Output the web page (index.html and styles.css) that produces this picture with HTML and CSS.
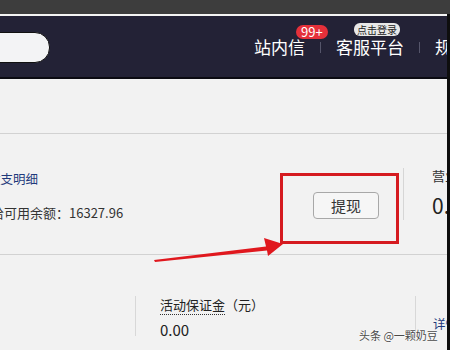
FILE: index.html
```html
<!DOCTYPE html>
<html lang="zh-CN">
<head>
  <meta charset="UTF-8">
  <title>资金账户</title>
  <link rel="stylesheet" href="styles.css">
</head>
<body>
  <div class="chrome"></div>

  <div class="frame">
    <!-- top navigation -->
    <div class="topbar">
      <div class="search"></div>
      <div class="nav">
        <span class="nav-item">站内信<span class="badge badge-red">99+</span></span>
        <span class="nav-sep"></span>
        <span class="nav-item">客服平台<span class="badge badge-light">点击登录</span></span>
        <span class="nav-sep"></span>
        <span class="nav-item">规则中心</span>
      </div>
    </div>

    <!-- account page -->
    <div class="page">
      <div class="band"></div>

      <div class="summary">
        <div class="info">
          <a class="link" href="#">收支明细</a>
          <p class="balance">结给可用余额：16327.96</p>
        </div>
        <button class="btn">提现</button>
        <div class="vline"></div>
        <div class="stat">
          <div class="stat-label">营业额</div>
          <div class="stat-value">0.00</div>
        </div>
      </div>

      <div class="deposits">
        <div class="cell cell-first"></div>
        <div class="cell cell-mid">
          <div class="dep-label"><span class="dotted">活动保证金</span>（元）</div>
          <div class="dep-value">0.00</div>
        </div>
        <div class="cell cell-last">
          <a class="link" href="#">详情</a>
        </div>
      </div>
    </div>
  </div>

  <!-- annotations drawn over the screenshot -->
  <div class="mark-box"></div>
  <svg class="mark-arrow" width="450" height="350" viewBox="0 0 450 350">
    <polygon points="154,260 266,246.5 264,238 283,244 268,256 267,250.5 155,262" fill="#e0181e"/>
  </svg>
  <div class="watermark">头条 @一颗奶豆</div>
</body>
</html>
```

FILE: styles.css
```css
body {
  margin: 0;
  width: 450px;
  height: 350px;
  overflow: hidden;
  position: relative;
  font-family: "Noto Sans CJK SC", "Noto Sans", sans-serif;
  background: #f2f2f2;
}
.chrome {
  height: 14px;
  background: #3d3d3d;
}
.frame {
  width: 447px;
  height: 336px;
  border-right: 3px solid #0e0e0e;
  overflow: hidden;
  background: #f2f2f2;
}

/* top navigation */
.topbar {
  display: flex;
  align-items: center;
  height: 61px;
  border-top: 2px solid #f4f4f4;
  border-bottom: 2px solid #0b0b12;
  background: #232236;
  overflow: hidden;
  white-space: nowrap;
}
.search {
  flex: none;
  width: 150px;
  height: 29px;
  margin-left: -102px;
  margin-top: 2px;
  border-radius: 15px;
  border: 1px solid #111;
  background: #f3f3f5;
}
.nav {
  display: flex;
  align-items: center;
  gap: 15px;
  margin-left: 204px;
  flex: none;
}
.nav-item {
  position: relative;
  color: #fff;
  font-size: 17px;
  line-height: 20px;
}
.nav-sep {
  width: 1px;
  height: 11px;
  margin-top: 2px;
  background: #55556a;
}
.badge {
  position: absolute;
  white-space: nowrap;
}
.badge-red {
  top: -12px;
  left: 42px;
  padding: 0 5px;
  height: 14px;
  line-height: 14px;
  font-size: 13px;
  color: #fff;
  background: #e5303a;
  border-radius: 7px;
}
.badge-light {
  top: -14px;
  left: 18px;
  padding: 0 3px;
  height: 13px;
  line-height: 13px;
  font-size: 10px;
  color: #222;
  background: #e8e8e8;
  border-radius: 6px;
}

/* account page */
.band {
  height: 54px;
  border-bottom: 1px solid #d2d2d2;
}
.summary {
  display: flex;
  height: 120px;
  border-bottom: 1px solid #d2d2d2;
}
.info {
  flex: 1;
  min-width: 0;
  margin-left: -12px;
  padding-top: 31px;
}
.link {
  color: #1f3a7c;
  text-decoration: none;
  font-size: 12.5px;
  line-height: 18px;
}
.balance {
  margin: 15px 0 0 -10px;
  font-size: 13px;
  line-height: 18px;
  color: #333;
  white-space: nowrap;
}
.btn {
  flex: none;
  align-self: flex-start;
  margin: 58px 24px 0 0;
  width: 66px;
  height: 27px;
  padding: 0;
  border: 1px solid #a8a8a8;
  border-radius: 4px;
  background: #f6f6f6;
  font-family: inherit;
  font-size: 15px;
  color: #333;
}
.vline {
  flex: none;
  width: 1px;
  height: 52px;
  margin-top: 34px;
  background: #d6d6d6;
}
.stat {
  flex: none;
  width: 15px;
  padding: 33px 0 0 28px;
  white-space: nowrap;
}
.stat-label {
  font-size: 13px;
  line-height: 18px;
  color: #333;
}
.stat-value {
  margin-top: 8px;
  font-size: 21px;
  line-height: 24px;
  color: #222;
}

.deposits {
  display: flex;
  padding-top: 41px;
}
.cell {
  flex: none;
}
.cell-first {
  width: 135px;
  height: 40px;
  border-right: 1px solid #d8d8d8;
}
.cell-mid {
  width: 255px;
  height: 40px;
  padding-left: 24px;
  border-right: 1px solid #d8d8d8;
}
.cell-last {
  padding: 14px 0 0 17px;
  white-space: nowrap;
}
.dep-label {
  font-size: 13px;
  line-height: 16px;
  margin-top: 1px;
  color: #222;
}
.dotted {
  border-bottom: 1px dotted #333;
}
.dep-value {
  margin-top: 8px;
  font-size: 15px;
  line-height: 18px;
  color: #222;
}

/* annotations */
.mark-box {
  position: absolute;
  left: 280px;
  top: 173px;
  width: 113px;
  height: 65px;
  border: 3px solid #d51b20;
}
.mark-arrow {
  position: absolute;
  left: 0;
  top: 0;
}
.watermark {
  position: absolute;
  left: 359px;
  top: 327px;
  font-size: 11px;
  color: #4a4a4a;
  text-shadow: 0 0 2px #fff, 0 0 2px #fff;
}
```
